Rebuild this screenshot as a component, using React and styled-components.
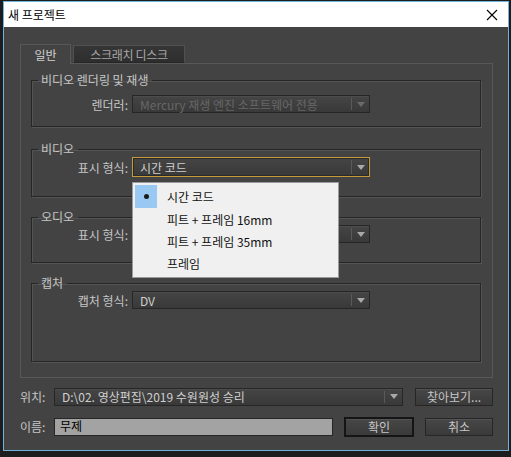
import React from 'react';
import styled, { createGlobalStyle } from 'styled-components';

const GlobalStyle = createGlobalStyle`
    body {
        margin: 0;
        background: #1d1d1d;
        font-family: "Noto Sans CJK KR", "Noto Sans", sans-serif;
    }
`;

const Window = styled.div`
    margin: 1px 0 0 3px;
    width: 504px;
    height: 448px;
    border: 1px solid #6cb4dc;
    background: #434343;
    display: flex;
    flex-direction: column;
`;

const TitleBar = styled.div`
    height: 25px;
    background: #ffffff;
    display: flex;
    align-items: center;
    justify-content: space-between;
    padding: 0 10px 0 4px;
    font-size: 12px;
    color: #000;
`;

const Body = styled.div`
    flex: 1;
    padding: 17px 15px 0 16px;
    display: flex;
    flex-direction: column;
    color: #c6c6c6;
    font-size: 12px;
`;

const TabRow = styled.div`
    display: flex;
    align-items: flex-end;
    gap: 2px;
    height: 19px;
`;

const Tab = styled.div`
    width: ${p => p.$w}px;
    height: ${p => (p.$active ? '20px' : '18px')};
    margin-bottom: ${p => (p.$active ? '-1px' : '0')};
    box-sizing: border-box;
    display: flex;
    align-items: center;
    justify-content: center;
    background: ${p => (p.$active ? '#434343' : 'linear-gradient(#363636, #2e2e2e)')};
    border: 1px solid ${p => (p.$active ? '#585858' : '#505050')};
    border-bottom: ${p => (p.$active ? 'none' : '1px solid #262626')};
    color: ${p => (p.$active ? '#d0d0d0' : '#a8a8a8')};
    letter-spacing: ${p => (p.$active ? '0' : '-0.3px')};
    white-space: nowrap;
    position: relative;
    z-index: 1;
`;

const Panel = styled.div`
    height: 315px;
    box-sizing: border-box;
    border: 1px solid #585858;
    padding: 8px 11px 0 10px;
    display: flex;
    flex-direction: column;
    gap: 12px;
    position: relative;
`;

const Group = styled.fieldset`
    margin: 0 0 ${p => p.$mb || 0}px 0;
    padding: 0;
    border: 1px solid #262626;
    box-shadow: 1px 1px 0 #545454, inset 1px 1px 0 #545454;
    height: ${p => p.$h}px;
    box-sizing: border-box;
    min-width: 0;
`;

const Legend = styled.legend`
    margin-left: 6px;
    padding: 0 4px 0 3px;
    font-size: 12px;
    line-height: 16px;
    color: #c6c6c6;
`;

const FieldRow = styled.div`
    display: flex;
    align-items: center;
    margin-top: ${p => p.$top || 0}px;
`;

const Label = styled.span`
    width: 96px;
    text-align: right;
    margin-right: 4px;
    color: #c6c6c6;
    white-space: nowrap;
`;

const Select = styled.div`
    width: ${p => p.$w || 238}px;
    height: ${p => p.$h || 18}px;
    box-sizing: border-box;
    border: 1px solid ${p => (p.$focus ? '#c59a3a' : '#262626')};
    background: linear-gradient(#454545, #393939);
    box-shadow: ${p => (p.$focus ? 'inset 0 0 0 1px #2a2a2a' : 'inset 0 1px 0 #4c4c4c')};
    display: flex;
    align-items: center;
    color: ${p => (p.$disabled ? '#676767' : '#cfcfcf')};
    padding-left: 7px;
    white-space: nowrap;
`;

const SelectText = styled.span`
    flex: 1;
    overflow: hidden;
`;

const Arrow = styled.span`
    width: 17px;
    align-self: stretch;
    margin: 2px 0;
    border-left: 1px solid #5a5a5a;
    display: flex;
    align-items: center;
    justify-content: center;
    &::after {
        content: '';
        border-left: 4px solid transparent;
        border-right: 4px solid transparent;
        border-top: 5px solid ${p => (p.$disabled ? '#6a6a6a' : '#a8a8a8')};
    }
`;

const Menu = styled.div`
    position: absolute;
    left: 111px;
    top: 118px;
    width: 207px;
    height: 96px;
    box-sizing: border-box;
    background: #f0f0f0;
    border: 1px solid #9a9a9a;
    padding: 2px 2px;
    color: #111;
    font-size: 12px;
    z-index: 5;
`;

const MenuItem = styled.div`
    display: flex;
    align-items: center;
    height: ${p => (p.$first ? 23 : 22)}px;
`;

const Check = styled.span`
    width: 22px;
    height: 23px;
    margin-right: 10px;
    display: flex;
    align-items: center;
    justify-content: center;
    background: ${p => (p.$on ? '#99c9f2' : 'transparent')};
    &::after {
        content: '';
        display: ${p => (p.$on ? 'block' : 'none')};
        width: 5px;
        height: 5px;
        border-radius: 50%;
        background: #1a1a1a;
    }
`;

const BottomRow = styled.div`
    display: flex;
    align-items: center;
    margin-top: ${p => p.$top}px;
    height: 19px;
`;

const BottomLabel = styled.span`
    width: 34px;
    white-space: nowrap;
`;

const Input = styled.div`
    width: 279px;
    height: 18px;
    box-sizing: border-box;
    border: 1px solid #262626;
    background: #a3a3a3;
    color: #000;
    padding-left: 5px;
    line-height: 13px;
    font-size: 12px;
`;

const Button = styled.div`
    width: ${p => p.$w}px;
    height: ${p => (p.$default ? 20 : 18)}px;
    margin-left: ${p => p.$ml}px;
    box-sizing: border-box;
    border: ${p => (p.$default ? '2px solid #151515' : '1px solid #262626')};
    background: linear-gradient(#474747, #3a3a3a);
    box-shadow: inset 0 1px 0 #535353;
    display: flex;
    align-items: center;
    justify-content: center;
    color: #c6c6c6;
    white-space: nowrap;
`;

const App = () => {
    return (
        <>
            <GlobalStyle />
            <Window>
                <TitleBar>
                    <span>새 프로젝트</span>
                    <svg width="12" height="12" viewBox="0 0 12 12">
                        <path d="M1 1 L11 11 M11 1 L1 11" stroke="#000" strokeWidth="1.1" />
                    </svg>
                </TitleBar>
                <Body>
                    <TabRow>
                        <Tab $active $w={51}>일반</Tab>
                        <Tab $w={112}>스크래치 디스크</Tab>
                    </TabRow>
                    <Panel>
                        <Group $h={55} $mb={2}>
                            <Legend>비디오 렌더링 및 재생</Legend>
                            <FieldRow $top={7}>
                                <Label>렌더러:</Label>
                                <Select $disabled>
                                    <SelectText>Mercury 재생 엔진 소프트웨어 전용</SelectText>
                                    <Arrow $disabled />
                                </Select>
                            </FieldRow>
                        </Group>
                        <Group $h={56}>
                            <Legend>비디오</Legend>
                            <FieldRow>
                                <Label>표시 형식:</Label>
                                <Select $focus $h={20}>
                                    <SelectText>시간 코드</SelectText>
                                    <Arrow />
                                </Select>
                            </FieldRow>
                        </Group>
                        <Group $h={54}>
                            <Legend>오디오</Legend>
                            <FieldRow>
                                <Label>표시 형식:</Label>
                                <Select>
                                    <SelectText />
                                    <Arrow />
                                </Select>
                            </FieldRow>
                        </Group>
                        <Group $h={87}>
                            <Legend>캡처</Legend>
                            <FieldRow>
                                <Label>캡처 형식:</Label>
                                <Select>
                                    <SelectText>DV</SelectText>
                                    <Arrow />
                                </Select>
                            </FieldRow>
                        </Group>
                        <Menu>
                            <MenuItem $first>
                                <Check $on />
                                시간 코드
                            </MenuItem>
                            <MenuItem>
                                <Check />
                                피트 + 프레임 16mm
                            </MenuItem>
                            <MenuItem>
                                <Check />
                                피트 + 프레임 35mm
                            </MenuItem>
                            <MenuItem>
                                <Check />
                                프레임
                            </MenuItem>
                        </Menu>
                    </Panel>
                    <BottomRow $top={9}>
                        <BottomLabel>위치:</BottomLabel>
                        <Select $w={349}>
                            <SelectText>D:\02. 영상편집\2019 수원원성 승리</SelectText>
                            <Arrow />
                        </Select>
                        <Button $w={78} $ml={12}>찾아보기...</Button>
                    </BottomRow>
                    <BottomRow $top={11}>
                        <BottomLabel>이름:</BottomLabel>
                        <Input>무제</Input>
                        <Button $default $w={70} $ml={11}>확인</Button>
                        <Button $w={68} $ml={11}>취소</Button>
                    </BottomRow>
                </Body>
            </Window>
        </>
    );
};

export default App;
